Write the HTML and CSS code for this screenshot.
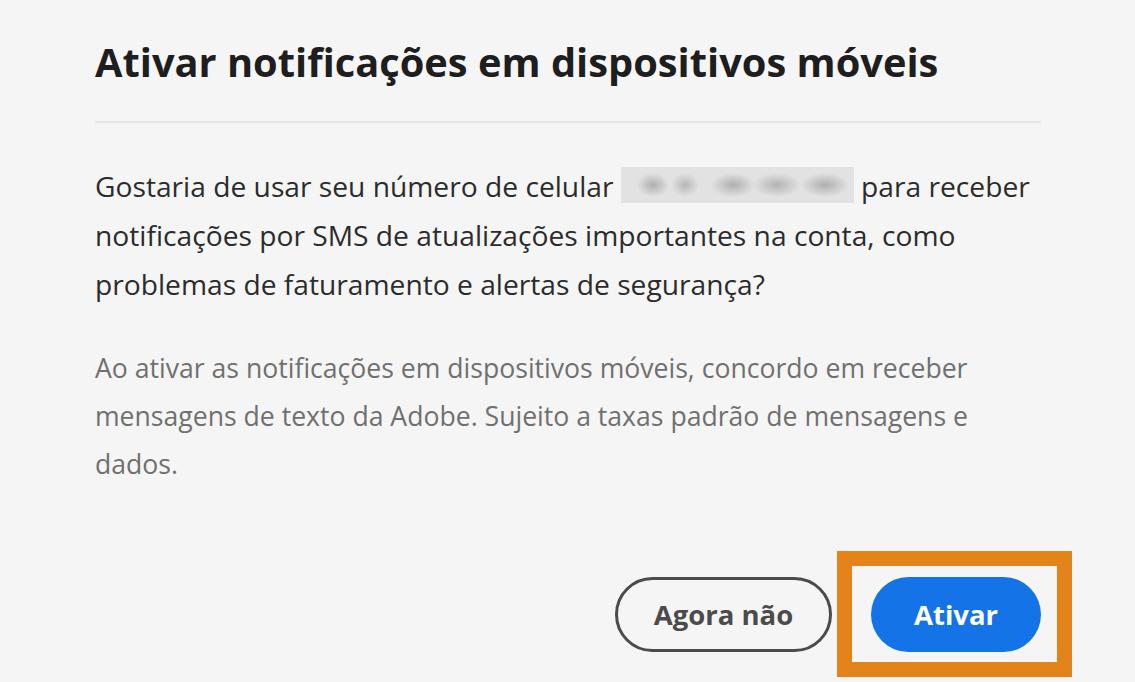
FILE: index.html
```html
<!DOCTYPE html>
<html lang="pt-BR">
<head>
<meta charset="utf-8">
<title>Ativar notificações em dispositivos móveis</title>
<link rel="stylesheet" href="styles.css">
</head>
<body>
  <section class="dialog">
    <h1 class="dialog-title">Ativar notificações em dispositivos móveis</h1>
    <hr class="dialog-divider">
    <p class="dialog-text">Gostaria de usar seu número de celular <span class="phone-blur"></span> para receber notificações por SMS de atualizações importantes na conta, como problemas de faturamento e alertas de segurança?</p>
    <p class="dialog-note">Ao ativar as notificações em dispositivos móveis, concordo em receber mensagens de texto da Adobe. Sujeito a taxas padrão de mensagens e dados.</p>
    <div class="dialog-actions">
      <button class="btn btn-secondary" type="button">Agora não</button>
      <div class="highlight">
        <button class="btn btn-primary" type="button">Ativar</button>
      </div>
    </div>
  </section>
</body>
</html>
```

FILE: styles.css
```css
html, body {
  margin: 0;
  padding: 0;
  background: #f5f5f5;
}

body {
  font-family: "Open Sans", "Noto Sans", "Liberation Sans", sans-serif;
  color: #2c2c2c;
  min-height: 100vh;
}

.dialog {
  padding: 38px 94px 30px 95px;
}

.dialog-title {
  margin: 0;
  font-size: 39.8px;
  line-height: 47px;
  font-weight: 700;
  color: #1e1e1e;
}

.dialog-divider {
  margin: 36px 0 0 0;
  border: 0;
  height: 2px;
  background: #e6e6e6;
}

.dialog-text {
  margin: 39px 0 0 0;
  font-size: 28.2px;
  line-height: 49px;
  color: #2c2c2c;
}

.phone-blur {
  display: inline-block;
  width: 233px;
  height: 36px;
  vertical-align: -6px;
  background:
    radial-gradient(ellipse 16px 12px at 32px 18px, rgba(140,140,140,0.6), rgba(140,140,140,0) 100%),
    radial-gradient(ellipse 14px 12px at 64px 18px, rgba(140,140,140,0.5), rgba(140,140,140,0) 100%),
    radial-gradient(ellipse 22px 12px at 112px 18px, rgba(140,140,140,0.6), rgba(140,140,140,0) 100%),
    radial-gradient(ellipse 24px 12px at 156px 18px, rgba(140,140,140,0.55), rgba(140,140,140,0) 100%),
    radial-gradient(ellipse 24px 12px at 204px 18px, rgba(140,140,140,0.6), rgba(140,140,140,0) 100%),
    #e2e2e2;
}

.dialog-note {
  margin: 35px 0 0 0;
  font-size: 26.6px;
  line-height: 48px;
  color: #707070;
}

.dialog-actions {
  display: flex;
  justify-content: flex-end;
  align-items: center;
  gap: 39px;
  margin-top: 89px;
}

.btn {
  font-family: inherit;
  font-weight: 700;
  font-size: 27.5px;
  height: 75px;
  border-radius: 38px;
  box-sizing: border-box;
  cursor: pointer;
  padding: 0;
}

.btn-secondary {
  width: 217px;
  background: transparent;
  border: 3px solid #4b4b4b;
  color: #4b4b4b;
}

.btn-primary {
  width: 170px;
  background: #1473e6;
  border: 0;
  color: #ffffff;
}

.highlight {
  display: flex;
  border: 15px solid #e4831a;
  padding: 11px 16px 10px 19px;
  margin: -26px -31px -25px -34px;
}
```
